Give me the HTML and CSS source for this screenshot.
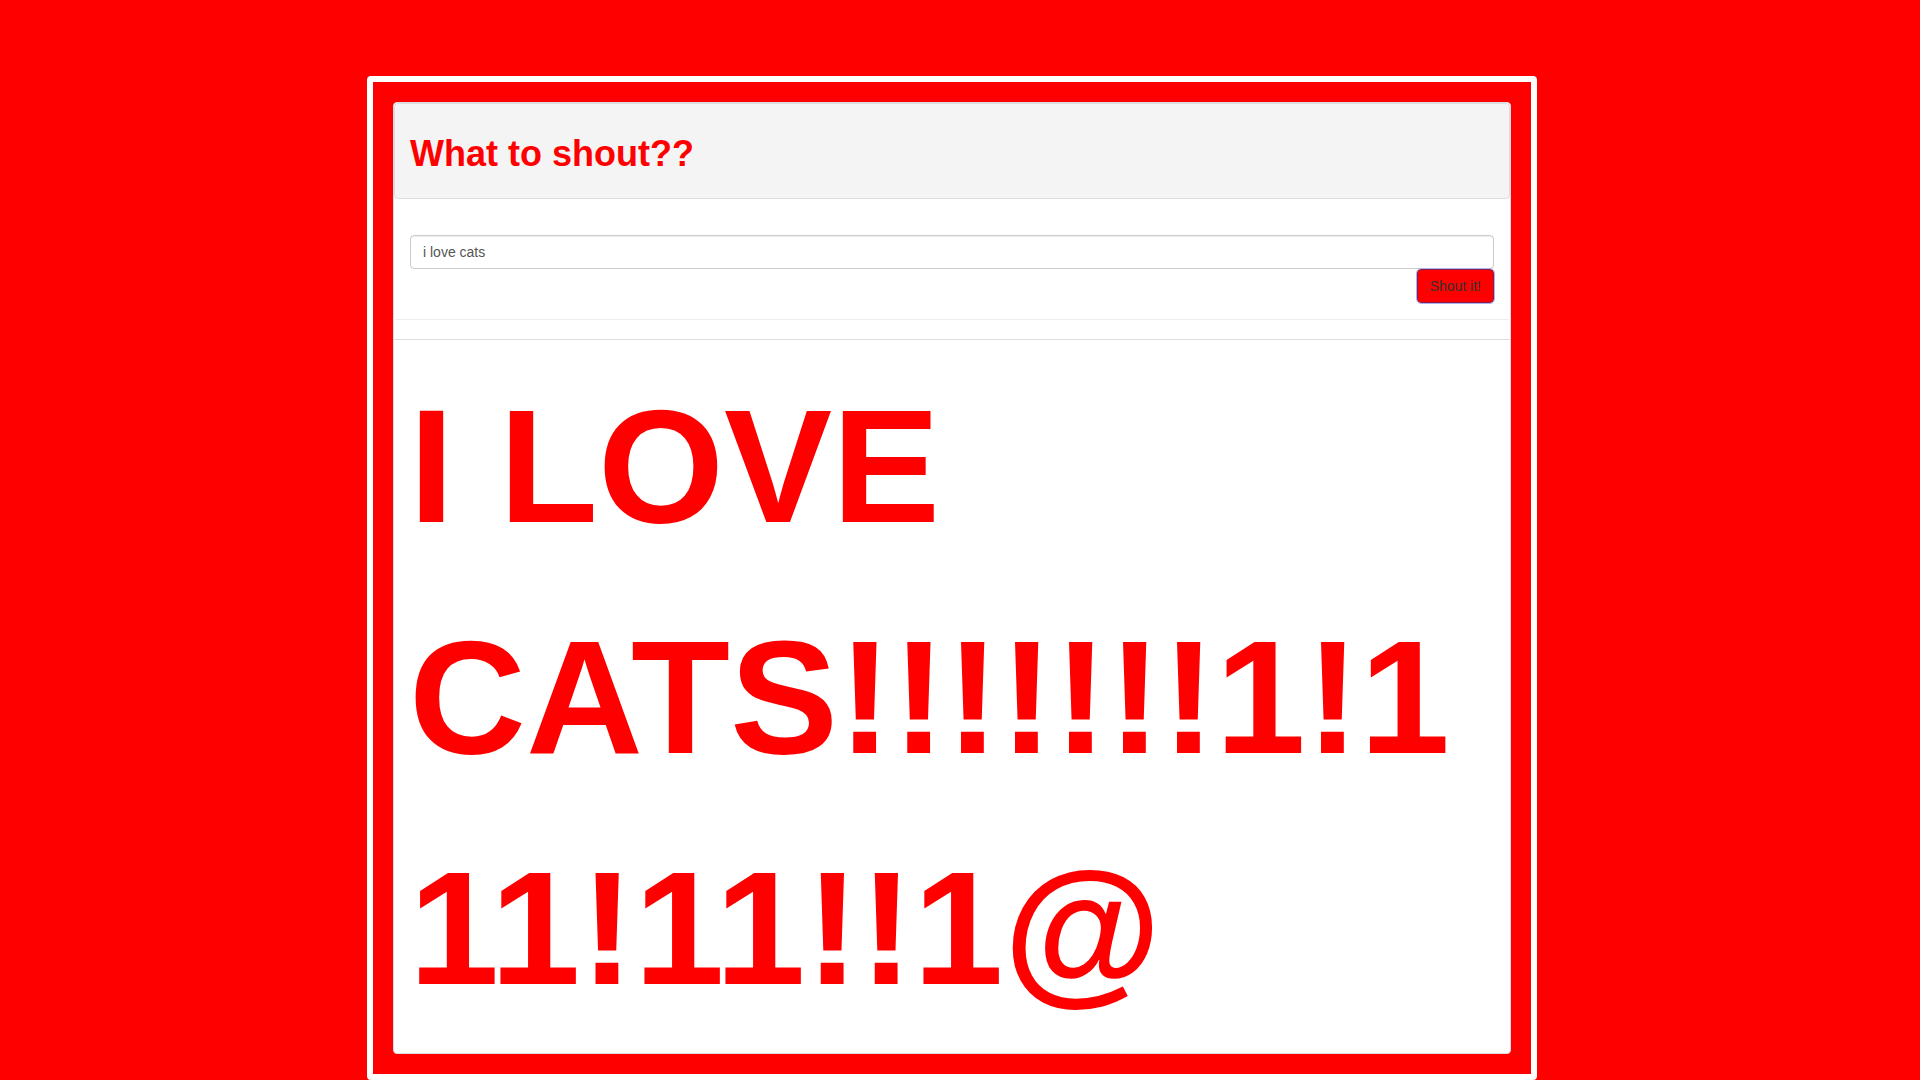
FILE: index.html
```html
<!DOCTYPE html>
<html lang="en">
<head>
<meta charset="utf-8">
<title>Shout</title>
<link rel="stylesheet" href="styles.css">
</head>
<body>
<main class="frame">
  <section class="panel">
    <header class="panel-heading"><h1 class="title">What to shout??</h1></header>
    <form class="panel-body">
      <input class="field" type="text" aria-label="What to shout" value="i love cats">
      <button class="shout-button" type="button">Shout it!</button>
    </form>
    <hr class="rule">
    <footer class="panel-footer"><p class="shout">I LOVE CATS!!!!!!!1!111!11!!1@</p></footer>
  </section>
</main>
</body>
</html>
```
FILE: styles.css
```css
* {
  box-sizing: border-box;
}

body {
  margin: 0;
  padding: 76px 16px 0 0;
  background: #f00;
  color: #333;
  font: 14px/20px "Liberation Sans", Arial, sans-serif;
}

.frame {
  max-width: 1170px;
  margin: 0 auto;
  padding: 20px;
  border: 6px solid #fff;
  border-radius: 4px;
}

.panel {
  background: #fff;
  border: 1px solid #ddd;
  border-radius: 4px;
}

.panel-heading {
  padding: 10px 15px;
  background: #f4f4f4;
  border: 1px solid #ddd;
  border-radius: 4px;
}

.title {
  margin: 20px 0 14px;
  color: #f00;
  font-size: 36px;
  line-height: 40px;
}

.panel-body {
  display: flex;
  flex-direction: column;
  padding: 36px 16px 16px;
}

.field {
  height: 34px;
  padding: 6px 12px;
  border: 1px solid #ccc;
  border-radius: 4px;
  color: #555;
  font: inherit;
  box-shadow: inset 0 1px 1px rgba(0, 0, 0, 0.075);
}

.shout-button {
  align-self: flex-end;
  height: 34px;
  padding: 6px 12px;
  background: #f00;
  border: 1px solid #8c1c50;
  border-radius: 4px;
  outline: 1px solid #a9b4f0;
  color: #333;
  font: inherit;
}

.rule {
  margin: 0 1px 19px;
  border: 0;
  border-top: 1px solid #eee;
}

.panel-footer {
  padding: 10px 15px;
  border-top: 1px solid #ddd;
}

.shout {
  margin: 0;
  color: #f00;
  font-size: 162px;
  font-weight: bold;
  line-height: 231px;
  overflow-wrap: anywhere;
}
```
